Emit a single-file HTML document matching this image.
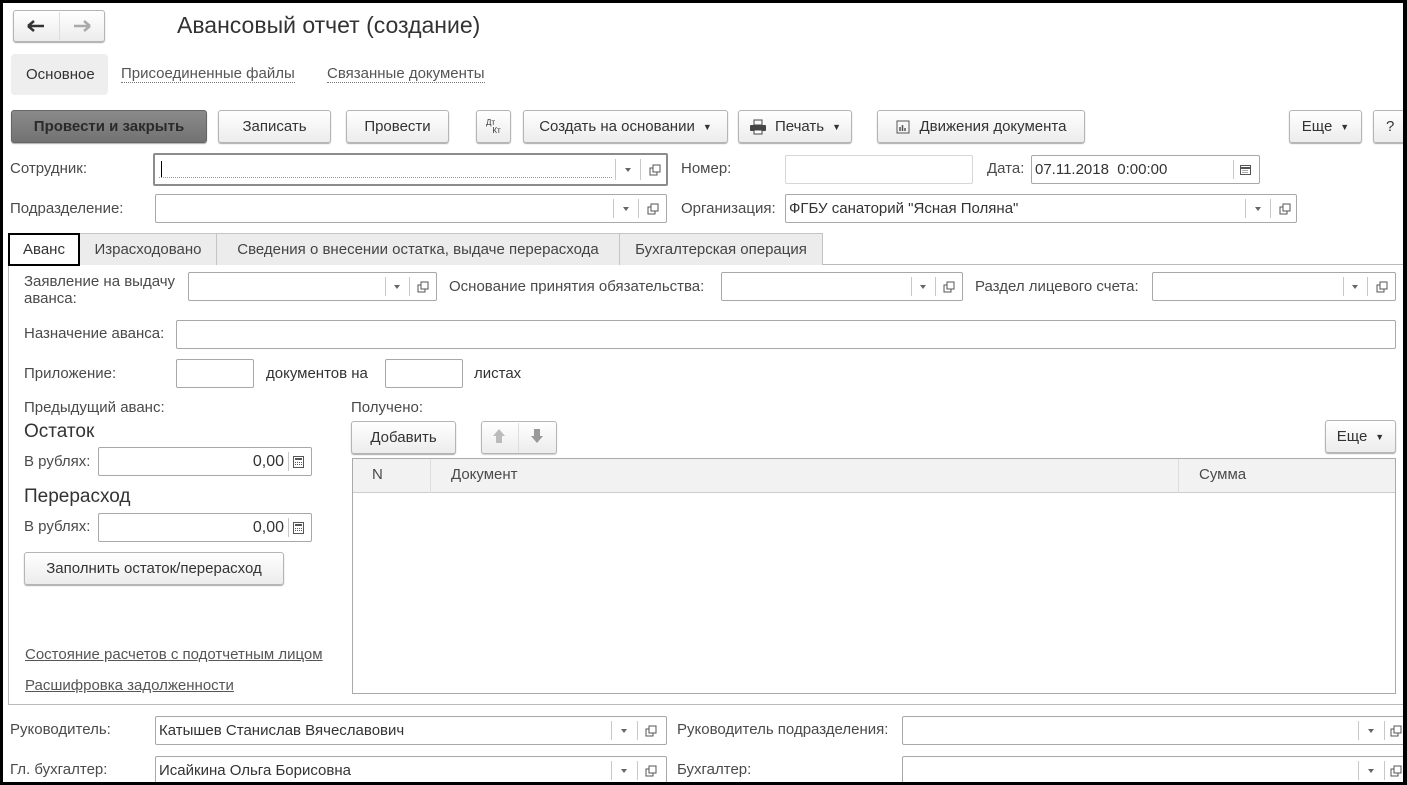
<!DOCTYPE html>
<html><head><meta charset="utf-8"><style>
*{box-sizing:border-box;margin:0;padding:0}
body{width:1407px;height:785px;position:relative;overflow:hidden;background:#fff;font-family:"Liberation Sans",Arial,sans-serif;font-size:15px;color:#4a4a4a}
.a{position:absolute;white-space:nowrap}
.frame{position:absolute;left:0;top:0;width:1407px;height:785px;border:3px solid #000;border-right-width:4px;z-index:10;pointer-events:none}
.btn{position:absolute;border:1px solid #b5b5b5;border-radius:3px;background:linear-gradient(#fff,#ececec);box-shadow:0 1px 1px #aaa;color:#333;display:flex;align-items:center;justify-content:center;white-space:nowrap}
.inp{position:absolute;border:1px solid #a8a8a8;border-radius:2px;background:#fff;color:#333;padding-left:3px;display:flex;align-items:center;white-space:nowrap}
.sep{position:absolute;top:4px;bottom:4px;width:1px;background:#c8c8c8}
.dd{position:absolute;top:50%;margin-top:-2px;width:0;height:0;border-left:3px solid transparent;border-right:3px solid transparent;border-top:4px solid #666}
.cp{position:absolute;top:50%;margin-top:-6px;width:12px;height:12px}
.lnk{position:absolute;white-space:nowrap;color:#555;border-bottom:1px dotted #777;line-height:16px}
.ul{position:absolute;white-space:nowrap;color:#555;text-decoration:underline}
.tab{position:absolute;top:233px;height:32px;background:#ececec;border:1px solid #c4c4c4;border-bottom:none;display:flex;align-items:center;justify-content:center;color:#444}
.ar{font-size:9px;margin-left:8px}
</style></head><body>
<div class="frame"></div>

<div class="btn" style="left:13px;top:10px;width:92px;height:32px"></div>
<div class="a" style="left:59px;top:12px;width:1px;height:28px;background:#ddd"></div>
<svg class="a" style="left:27px;top:19px" width="18" height="14"><path d="M1 7H17M1 7L7 2M1 7L7 12" stroke="#333" stroke-width="2.5" fill="none"/></svg>
<svg class="a" style="left:73px;top:19px" width="18" height="14"><path d="M1 7H17M17 7L11 2M17 7L11 12" stroke="#aaa" stroke-width="2.5" fill="none"/></svg>
<div class="a" style="left:177px;top:12px;font-size:23px;color:#333">Авансовый отчет (создание)</div>

<div class="a" style="left:11px;top:54px;width:97px;height:41px;background:#eee;border-radius:4px"></div>
<div class="a" style="left:26px;top:66px;color:#333">Основное</div>
<div class="lnk" style="left:121px;top:66px">Присоединенные файлы</div>
<div class="lnk" style="left:327px;top:66px">Связанные документы</div>

<div class="btn" style="left:11px;top:110px;width:196px;height:33px;background:linear-gradient(#8a8a8a,#727272);border-color:#666;color:#2a2a2a;font-weight:bold;font-size:15px">Провести и закрыть</div>
<div class="btn" style="left:218px;top:110px;width:113px;height:33px">Записать</div>
<div class="btn" style="left:346px;top:110px;width:103px;height:33px">Провести</div>
<div class="btn" style="left:476px;top:110px;width:35px;height:33px;font-size:8px;line-height:8px;flex-direction:column"><span style="margin-left:-6px">Дт</span><span style="margin-left:6px">Кт</span></div>
<div class="btn" style="left:523px;top:110px;width:205px;height:33px">Создать на основании<span class="ar">▼</span></div>
<div class="btn" style="left:738px;top:110px;width:114px;height:33px"><svg width="18" height="16" style="margin-right:8px"><rect x="5" y="1" width="8" height="5" fill="none" stroke="#444"/><rect x="1" y="6" width="16" height="6" rx="1" fill="#444"/><rect x="5" y="11" width="8" height="4" fill="#fff" stroke="#444"/></svg>Печать<span class="ar">▼</span></div>
<div class="btn" style="left:877px;top:110px;width:208px;height:33px"><svg width="14" height="14" style="margin-right:10px"><rect x="1" y="1" width="12" height="12" fill="none" stroke="#555"/><path d="M4 11V7M6.5 11V5M9 11V8" stroke="#555" stroke-width="1.5"/></svg>Движения документа</div>
<div class="btn" style="left:1289px;top:110px;width:73px;height:33px">Еще<span class="ar">▼</span></div>
<div class="btn" style="left:1373px;top:110px;width:40px;height:33px;justify-content:flex-start;padding-left:12px">?</div>

<div class="a" style="left:10px;top:160px">Сотрудник:</div>
<div class="inp" style="left:153px;top:153px;width:515px;height:33px;border:2px solid #8c8c8c"><div style="position:absolute;left:6px;top:6px;width:1px;height:16px;background:#000"></div><div style="position:absolute;left:4px;right:54px;bottom:6px;border-bottom:1px dotted #999"></div><div class="sep" style="left:460px"></div><div class="dd" style="left:470px"></div><div class="sep" style="left:485px"></div><svg class="cp" style="left:494px" viewBox="0 0 12 12"><path d="M4 1H11V8H4Z M4 4H1V11H8V8" fill="none" stroke="#555"/></svg></div>
<div class="a" style="left:681px;top:160px">Номер:</div>
<div class="inp" style="left:785px;top:155px;width:188px;height:29px;border-color:#d6d6d6"></div>
<div class="a" style="left:987px;top:160px">Дата:</div>
<div class="inp" style="left:1031px;top:155px;width:229px;height:29px">07.11.2018&nbsp; 0:00:00<div class="sep" style="left:201px"></div><svg class="a" style="left:208px;top:8px" width="11" height="11"><rect x="0.5" y="1.5" width="10" height="9" fill="none" stroke="#555"/><path d="M0 4H11" stroke="#555" stroke-width="2"/><path d="M2.5 6.5h6M2.5 8.5h6" stroke="#555" stroke-dasharray="1 1"/></svg></div>

<div class="a" style="left:10px;top:200px">Подразделение:</div>
<div class="inp" style="left:155px;top:194px;width:512px;height:29px"><div class="sep" style="left:457px"></div><div class="dd" style="left:467px"></div><div class="sep" style="left:482px"></div><svg class="cp" style="left:491px" viewBox="0 0 12 12"><path d="M4 1H11V8H4Z M4 4H1V11H8V8" fill="none" stroke="#555"/></svg></div>
<div class="a" style="left:681px;top:200px">Организация:</div>
<div class="inp" style="left:785px;top:194px;width:512px;height:29px">ФГБУ санаторий "Ясная Поляна"<div class="sep" style="left:459px"></div><div class="dd" style="left:469px"></div><div class="sep" style="left:484px"></div><svg class="cp" style="left:493px" viewBox="0 0 12 12"><path d="M4 1H11V8H4Z M4 4H1V11H8V8" fill="none" stroke="#555"/></svg></div>

<div class="a" style="left:8px;top:264px;width:1400px;height:1px;background:#bbb"></div>
<div class="a" style="left:8px;top:264px;width:1px;height:441px;background:#bbb"></div>
<div class="a" style="left:8px;top:704px;width:1400px;height:1px;background:#bbb"></div>
<div class="tab" style="left:79px;width:138px">Израсходовано</div>
<div class="tab" style="left:216px;width:404px">Сведения о внесении остатка, выдаче перерасхода</div>
<div class="tab" style="left:619px;width:204px">Бухгалтерская операция</div>
<div class="tab" style="left:8px;width:72px;background:#fff;border:2px solid #000;height:33px;color:#333">Аванс</div>

<div class="a" style="left:24px;top:273px;line-height:17px">Заявление на выдачу<br>аванса:</div>
<div class="inp" style="left:188px;top:272px;width:249px;height:29px"><div class="sep" style="left:196px"></div><div class="dd" style="left:205px"></div><div class="sep" style="left:220px"></div><svg class="cp" style="left:228px" viewBox="0 0 12 12"><path d="M4 1H11V8H4Z M4 4H1V11H8V8" fill="none" stroke="#555"/></svg></div>
<div class="a" style="left:449px;top:278px">Основание принятия обязательства:</div>
<div class="inp" style="left:721px;top:272px;width:242px;height:29px"><div class="sep" style="left:189px"></div><div class="dd" style="left:198px"></div><div class="sep" style="left:213px"></div><svg class="cp" style="left:221px" viewBox="0 0 12 12"><path d="M4 1H11V8H4Z M4 4H1V11H8V8" fill="none" stroke="#555"/></svg></div>
<div class="a" style="left:975px;top:278px">Раздел лицевого счета:</div>
<div class="inp" style="left:1152px;top:272px;width:244px;height:29px"><div class="sep" style="left:190px"></div><div class="dd" style="left:199px"></div><div class="sep" style="left:214px"></div><svg class="cp" style="left:223px" viewBox="0 0 12 12"><path d="M4 1H11V8H4Z M4 4H1V11H8V8" fill="none" stroke="#555"/></svg></div>

<div class="a" style="left:24px;top:325px">Назначение аванса:</div>
<div class="inp" style="left:176px;top:320px;width:1220px;height:29px"></div>
<div class="a" style="left:24px;top:365px">Приложение:</div>
<div class="inp" style="left:176px;top:359px;width:78px;height:29px"></div>
<div class="a" style="left:266px;top:365px;color:#333">документов на</div>
<div class="inp" style="left:385px;top:359px;width:78px;height:29px"></div>
<div class="a" style="left:474px;top:365px;color:#333">листах</div>

<div class="a" style="left:24px;top:399px">Предыдущий аванс:</div>
<div class="a" style="left:24px;top:421px;font-size:19px;color:#333">Остаток</div>
<div class="a" style="left:24px;top:453px">В рублях:</div>
<div class="inp" style="left:98px;top:447px;width:214px;height:29px;justify-content:flex-end;padding-right:27px;font-size:16px">0,00<div class="sep" style="left:189px"></div><svg class="a" style="left:194px;top:8px" width="11" height="12"><rect x="0.5" y="0.5" width="10" height="11" fill="none" stroke="#555"/><rect x="2" y="2" width="7" height="2" fill="#555"/><path d="M2 6.5h7M2 8.5h7" stroke="#555" stroke-dasharray="1 1"/></svg></div>
<div class="a" style="left:24px;top:486px;font-size:19px;color:#333">Перерасход</div>
<div class="a" style="left:24px;top:518px">В рублях:</div>
<div class="inp" style="left:98px;top:513px;width:214px;height:29px;justify-content:flex-end;padding-right:27px;font-size:16px">0,00<div class="sep" style="left:189px"></div><svg class="a" style="left:194px;top:8px" width="11" height="12"><rect x="0.5" y="0.5" width="10" height="11" fill="none" stroke="#555"/><rect x="2" y="2" width="7" height="2" fill="#555"/><path d="M2 6.5h7M2 8.5h7" stroke="#555" stroke-dasharray="1 1"/></svg></div>
<div class="btn" style="left:24px;top:552px;width:260px;height:33px">Заполнить остаток/перерасход</div>
<div class="ul" style="left:25px;top:646px">Состояние расчетов с подотчетным лицом</div>
<div class="ul" style="left:25px;top:677px">Расшифровка задолженности</div>

<div class="a" style="left:351px;top:399px">Получено:</div>
<div class="btn" style="left:351px;top:421px;width:105px;height:33px">Добавить</div>
<div class="btn" style="left:481px;top:421px;width:76px;height:33px;box-shadow:0 1px 1px #ccc"></div>
<div class="a" style="left:518px;top:423px;width:1px;height:29px;background:#ddd"></div>
<svg class="a" style="left:492px;top:428px" width="14" height="16"><path d="M7 1L1 8H4V15H10V8H13Z" fill="#bbb"/></svg>
<svg class="a" style="left:530px;top:428px" width="14" height="16"><path d="M7 15L1 8H4V1H10V8H13Z" fill="#999"/></svg>
<div class="btn" style="left:1325px;top:420px;width:71px;height:33px">Еще<span class="ar">▼</span></div>

<div class="a" style="left:352px;top:458px;width:1044px;height:236px;border:1px solid #aaa"></div>
<div class="a" style="left:353px;top:459px;width:1042px;height:34px;background:#f2f2f2;border-bottom:1px solid #ccc"></div>
<div class="a" style="left:430px;top:459px;width:1px;height:34px;background:#ddd"></div>
<div class="a" style="left:1178px;top:459px;width:1px;height:34px;background:#ddd"></div>
<div class="a" style="left:372px;top:466px">N</div>
<div class="a" style="left:451px;top:466px">Документ</div>
<div class="a" style="left:1199px;top:466px">Сумма</div>

<div class="a" style="left:10px;top:721px">Руководитель:</div>
<div class="inp" style="left:155px;top:716px;width:512px;height:29px">Катышев Станислав Вячеславович<div class="sep" style="left:455px"></div><div class="dd" style="left:465px"></div><div class="sep" style="left:481px"></div><svg class="cp" style="left:489px" viewBox="0 0 12 12"><path d="M4 1H11V8H4Z M4 4H1V11H8V8" fill="none" stroke="#555"/></svg></div>
<div class="a" style="left:677px;top:721px">Руководитель подразделения:</div>
<div class="inp" style="left:902px;top:716px;width:520px;height:29px"><div class="sep" style="left:455px"></div><div class="dd" style="left:465px"></div><div class="sep" style="left:481px"></div><svg class="cp" style="left:487px" viewBox="0 0 12 12"><path d="M4 1H11V8H4Z M4 4H1V11H8V8" fill="none" stroke="#555"/></svg></div>
<div class="a" style="left:10px;top:761px">Гл. бухгалтер:</div>
<div class="inp" style="left:155px;top:756px;width:512px;height:29px">Исайкина Ольга Борисовна<div class="sep" style="left:455px"></div><div class="dd" style="left:465px"></div><div class="sep" style="left:481px"></div><svg class="cp" style="left:489px" viewBox="0 0 12 12"><path d="M4 1H11V8H4Z M4 4H1V11H8V8" fill="none" stroke="#555"/></svg></div>
<div class="a" style="left:677px;top:761px">Бухгалтер:</div>
<div class="inp" style="left:902px;top:756px;width:520px;height:29px"><div class="sep" style="left:455px"></div><div class="dd" style="left:465px"></div><div class="sep" style="left:481px"></div><svg class="cp" style="left:487px" viewBox="0 0 12 12"><path d="M4 1H11V8H4Z M4 4H1V11H8V8" fill="none" stroke="#555"/></svg></div>
</body></html>
